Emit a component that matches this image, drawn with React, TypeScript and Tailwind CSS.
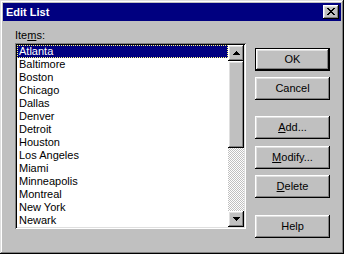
import React from "react";

const items = [
  "Atlanta",
  "Baltimore",
  "Boston",
  "Chicago",
  "Dallas",
  "Denver",
  "Detroit",
  "Houston",
  "Los Angeles",
  "Miami",
  "Minneapolis",
  "Montreal",
  "New York",
  "Newark",
];

const raised =
  "shadow-[inset_-1px_-1px_#000,inset_1px_1px_#fff,inset_-2px_-2px_#808080,inset_2px_2px_#dfdfdf]";

function Btn({ children, def }: { children: React.ReactNode; def?: boolean }) {
  if (def) {
    return (
      <div className="w-[75px] h-[23px] border border-black">
        <div
          className={`w-full h-full bg-[#c0c0c0] flex items-center justify-center ${raised}`}
        >
          {children}
        </div>
      </div>
    );
  }
  return (
    <div
      className={`w-[75px] h-[23px] bg-[#c0c0c0] flex items-center justify-center ${raised}`}
    >
      {children}
    </div>
  );
}

function Arrow({ up }: { up?: boolean }) {
  return (
    <svg width="7" height="4" viewBox="0 0 7 4" shapeRendering="crispEdges">
      {up ? (
        <path d="M3 0h1v1h1v1h1v1h1v1H0V3h1V2h1V1h1z" fill="#000" />
      ) : (
        <path d="M0 0h7v1H6v1H5v1H4v1H3V3H2V2H1V1H0z" fill="#000" />
      )}
    </svg>
  );
}

export default function App() {
  return (
    <div
      className="w-[344px] h-[254px] bg-[#c0c0c0] p-[3px] flex flex-col shadow-[inset_-1px_-1px_#000,inset_1px_1px_#dfdfdf,inset_-2px_-2px_#808080,inset_2px_2px_#fff] text-[11px] leading-[13px] text-black"
      style={{ fontFamily: '"Liberation Sans", Arial, sans-serif' }}
    >
      {/* title bar */}
      <div className="h-[18px] bg-[#000080] flex items-center justify-between pl-[3px] pr-[2px]">
        <span className="text-white font-bold text-[11px] leading-[13px]">Edit List</span>
        <div
          className={`w-[16px] h-[14px] bg-[#c0c0c0] flex items-center justify-center ${raised}`}
        >
          <svg width="8" height="7" viewBox="0 0 8 7" shapeRendering="crispEdges" className="mt-[-1px]">
            <path
              d="M0 0h2v1h1v1h2V1h1V0h2v1H7v1H6v1H5v1h1v1h1v1h1v1H6V6H5V5H3v1H2v1H0V6h1V5h1V4h1V3H2V2H1V1H0z"
              fill="#000"
            />
          </svg>
        </div>
      </div>

      {/* body */}
      <div className="flex pl-[12px] pt-[8px]">
        <div className="flex flex-col">
          <div className="h-[13px] mb-[1px]">
            Ite<span className="underline underline-offset-[1px]">m</span>s:
          </div>
          <div className="w-[231px] h-[186px] p-[2px] bg-white shadow-[inset_1px_1px_#808080,inset_-1px_-1px_#fff,inset_2px_2px_#000,inset_-2px_-2px_#dfdfdf] flex">
            <div className="flex-1 flex flex-col">
              {items.map((it, i) =>
                i === 0 ? (
                  <div
                    key={it}
                    className="h-[13px] bg-[#000080] text-white pl-[2px] outline outline-1 outline-dotted outline-[#ffff80] -outline-offset-1"
                  >
                    {it}
                  </div>
                ) : (
                  <div key={it} className="h-[13px] pl-[2px] whitespace-nowrap">
                    {it}
                  </div>
                )
              )}
            </div>
            <div className="w-[16px] flex flex-col">
              <div
                className={`h-[16px] bg-[#c0c0c0] flex items-center justify-center ${raised}`}
              >
                <Arrow up />
              </div>
              <div className={`h-[87px] bg-[#c0c0c0] ${raised}`} />
              <div className="flex-1 bg-[repeating-conic-gradient(#fff_0_25%,#c0c0c0_0_50%)] bg-[length:2px_2px]" />
              <div
                className={`h-[16px] bg-[#c0c0c0] flex items-center justify-center ${raised}`}
              >
                <Arrow />
              </div>
            </div>
          </div>
        </div>

        <div className="flex flex-col ml-[9px] pt-[19px]">
          <Btn def>OK</Btn>
          <div className="mt-[6px]">
            <Btn>Cancel</Btn>
          </div>
          <div className="mt-[16px]">
            <Btn>
              <span className="underline underline-offset-[1px]">A</span>dd...
            </Btn>
          </div>
          <div className="mt-[7px]">
            <Btn>
              <span className="underline underline-offset-[1px]">M</span>odify...
            </Btn>
          </div>
          <div className="mt-[6px]">
            <Btn>
              <span className="underline underline-offset-[1px]">D</span>elete
            </Btn>
          </div>
          <div className="mt-[17px]">
            <Btn>Help</Btn>
          </div>
        </div>
      </div>
    </div>
  );
}
